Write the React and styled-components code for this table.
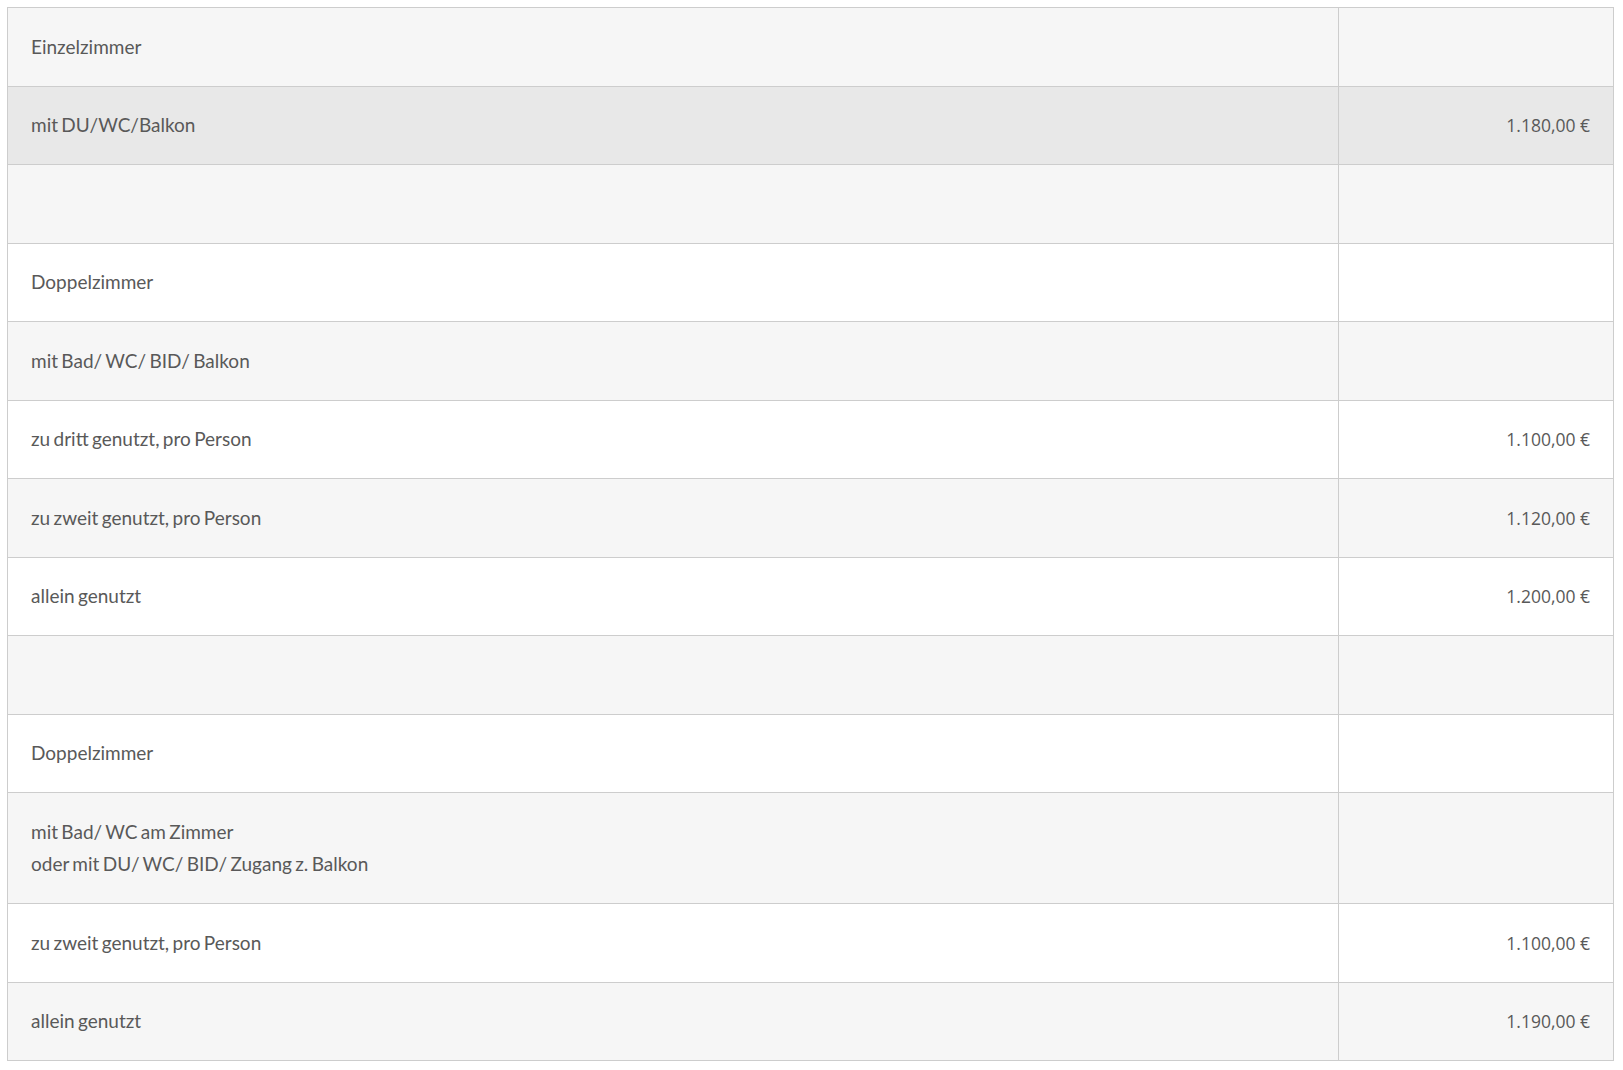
import React from 'react';
import styled, { createGlobalStyle } from 'styled-components';

const GlobalStyle = createGlobalStyle`
  body {
    margin: 0;
    background: #ffffff;
  }
`;

const Page = styled.div`
  padding: 7px;
`;

const PriceTable = styled.table`
  width: 1606px;
  table-layout: fixed;
  border-collapse: collapse;
  border: 1px solid #cdcdcd;
`;

const Col = styled.col`
  width: ${props => props.width};
`;

const Row = styled.tr`
  background: ${props => props.highlight ? '#e8e8e8' : props.striped ? '#f6f6f6' : '#ffffff'};
`;

const Label = styled.td`
  border: 1px solid #cdcdcd;
  padding: 22.5px 23px;
  font-family: Lato, "Open Sans", sans-serif;
  font-size: 19px;
  line-height: 32.5px;
  word-spacing: -1.5px;
  color: #595959;
`;

const Price = styled.td`
  border: 1px solid #cdcdcd;
  padding: 22.5px 23px;
  font-family: "Open Sans", Lato, sans-serif;
  font-size: 17.5px;
  line-height: 32.5px;
  color: #595959;
  text-align: right;
  white-space: nowrap;
`;

const ROWS = [
  { label: 'Einzelzimmer', price: '' },
  { label: 'mit DU/WC/Balkon', price: '1.180,00 €', highlight: true },
  { label: '', price: '' },
  { label: 'Doppelzimmer', price: '' },
  { label: 'mit Bad/ WC/ BID/ Balkon', price: '' },
  { label: 'zu dritt genutzt, pro Person', price: '1.100,00 €' },
  { label: 'zu zweit genutzt, pro Person', price: '1.120,00 €' },
  { label: 'allein genutzt', price: '1.200,00 €' },
  { label: '', price: '' },
  { label: 'Doppelzimmer', price: '' },
  { label: ['mit Bad/ WC am Zimmer', 'oder mit DU/ WC/ BID/ Zugang z. Balkon'], price: '' },
  { label: 'zu zweit genutzt, pro Person', price: '1.100,00 €' },
  { label: 'allein genutzt', price: '1.190,00 €' },
];

function renderLabel(label) {
  if (Array.isArray(label)) {
    return label.map((line, i) => (
      <React.Fragment key={i}>
        {i > 0 && <br />}
        {line}
      </React.Fragment>
    ));
  }
  return label || '\u00a0';
}

export default function App() {
  return (
    <Page>
      <GlobalStyle />
      <PriceTable>
        <colgroup>
          <Col width="1331px" />
          <Col width="275px" />
        </colgroup>
        <tbody>
          {ROWS.map((row, key) => (
            <Row key={key} striped={key % 2 === 0} highlight={row.highlight}>
              <Label>{renderLabel(row.label)}</Label>
              <Price>{row.price}</Price>
            </Row>
          ))}
        </tbody>
      </PriceTable>
    </Page>
  );
}
